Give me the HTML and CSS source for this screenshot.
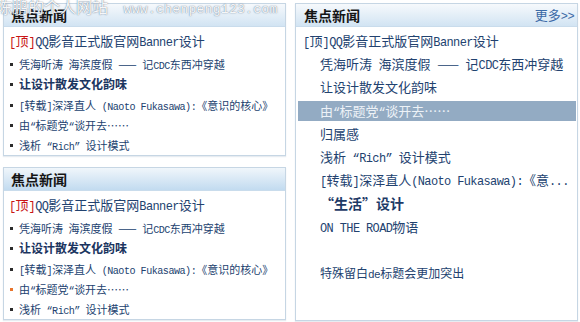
FILE: index.html
```html
<html>
<head>
	<meta charset="utf-8">
	<title>焦点新闻</title>
	<link rel="stylesheet" href="styles.css">
</head>
<body>
<div class="page">
	<div class="mark">陈鹏的个人网站 <span class="mark-url">www.chenpeng123.com</span></div>

	<div class="col">
		<!-- box 1 -->
		<div class="box box-small">
			<div class="box-hd"><h2>焦点新闻</h2></div>
			<ul class="news">
				<li class="first"><em><span class="en">[</span>顶<span class="en">]</span></em><span class="en">QQ</span>影音正式版官网<span class="en">Banner</span>设计</li>
				<li>凭海听涛<span class="en"> </span>海滨度假<span class="en"> </span>——<span class="en"> </span>记<span class="en">CDC</span>东西冲穿越</li>
				<li class="bold">让设计散发文化韵味</li>
				<li><span class="en">[</span>转载<span class="en">]</span>深泽直人<span class="en"> (Naoto Fukasawa):</span>《意识的核心》</li>
				<li>由<span class="en">“</span>标题党<span class="en">“</span>谈开去……</li>
				<li>浅析<span class="en"> “Rich” </span>设计模式</li>
			</ul>
		</div>

		<!-- box 2 -->
		<div class="box box-small box-blue">
			<div class="box-hd"><h2>焦点新闻</h2></div>
			<ul class="news">
				<li class="first"><em><span class="en">[</span>顶<span class="en">]</span></em><span class="en">QQ</span>影音正式版官网<span class="en">Banner</span>设计</li>
				<li>凭海听涛<span class="en"> </span>海滨度假<span class="en"> </span>——<span class="en"> </span>记<span class="en">CDC</span>东西冲穿越</li>
				<li class="bold">让设计散发文化韵味</li>
				<li><span class="en">[</span>转载<span class="en">]</span>深泽直人<span class="en"> (Naoto Fukasawa):</span>《意识的核心》</li>
				<li class="hover">由<span class="en">“</span>标题党<span class="en">“</span>谈开去……</li>
				<li>浅析<span class="en"> “Rich” </span>设计模式</li>
			</ul>
		</div>
	</div>

	<!-- box 3 -->
	<div class="box box-big">
		<div class="box-hd">
			<h2>焦点新闻</h2>
			<a class="more">更多<span class="en">&gt;&gt;</span></a>
		</div>
		<ul class="list">
			<li class="first"><span class="en">[</span>顶<span class="en">]QQ</span>影音正式版官网<span class="en">Banner</span>设计</li>
			<li>凭海听涛<span class="en"> </span>海滨度假<span class="en"> </span>——<span class="en"> </span>记<span class="en">CDC</span>东西冲穿越</li>
			<li>让设计散发文化韵味</li>
			<li class="on">由<span class="en">“</span>标题党<span class="en">“</span>谈开去……</li>
			<li>归属感</li>
			<li>浅析<span class="en"> “Rich” </span>设计模式</li>
			<li><span class="en">[</span>转载<span class="en">]</span>深泽直人<span class="en">(Naoto Fukasawa):</span>《意<span class="en">...</span></li>
			<li class="bold">“生活”设计</li>
			<li><span class="en">ON THE ROAD</span>物语</li>
			<li>&nbsp;</li>
			<li class="small">特殊留白<span class="en">de</span>标题会更加突出</li>
		</ul>
	</div>
</div>
</body>
</html>
```

FILE: styles.css
```css
body {
	margin: 0;
	background: #fff;
	font-family: "Noto Sans CJK SC", sans-serif;
	color: #22426f;
}
ul {
	margin: 0;
	padding: 0;
	list-style: none;
}
.en {
	font-family: "Liberation Mono", monospace;
	font-size: 0.92em;
	letter-spacing: -0.05em;
	line-height: 1;
}

.page {
	position: relative;
	display: grid;
	grid-template-columns: 283px 283px;
	column-gap: 9px;
	padding: 3px;
}
.col {
	display: flex;
	flex-direction: column;
	gap: 11px;
}

/* watermark over the top left */
.mark {
	position: absolute;
	top: -5px;
	left: -4px;
	font-size: 16px;
	line-height: 22px;
	color: rgba(255, 255, 255, 0.96);
	text-shadow: 0 0 1px rgba(80, 100, 125, 0.9), 0 0 2px rgba(140, 160, 185, 0.5);
	white-space: nowrap;
	z-index: 2;
}
.mark-url {
	margin-left: 12px;
	font-family: "Liberation Mono", monospace;
	font-size: 13px;
	letter-spacing: 0.3px;
}

.box {
	border: 1px solid #c6d6e4;
	background: #fff;
	box-shadow: 0 1px 1px rgba(160, 180, 200, 0.25);
	overflow: hidden;
}
.box-small {
	height: 151px;
}
.box-big {
	height: 316px;
}
.box-hd {
	display: flex;
	justify-content: space-between;
	align-items: center;
	height: 22px;
	border-bottom: 1px solid #c9dcec;
	background: linear-gradient(#f6f9fc, #d2e4f3);
}
.box-blue .box-hd {
	background: linear-gradient(#f0f6fb, #c2dbf0);
}
.box-hd h2 {
	margin: 0;
	padding-left: 7px;
	font-size: 14px;
	line-height: 22px;
	font-weight: bold;
	color: #151515;
}
.box-big .box-hd h2 {
	padding-left: 8px;
}
.more {
	padding-right: 3px;
	font-size: 13px;
	line-height: 22px;
	color: #3b6aa6;
}

/* left lists */
.news {
	padding: 4px 0 0 5px;
}
.news li {
	position: relative;
	height: 20.25px;
	padding-left: 10px;
	font-size: 11px;
	line-height: 20px;
	white-space: nowrap;
}
.news li::before {
	content: "";
	position: absolute;
	left: 1px;
	top: 9px;
	width: 3px;
	height: 3px;
	background: #2c2c2c;
}
.news li.first {
	height: 20px;
	padding: 0 0 3px 0;
	font-size: 13px;
}
.news li.first::before {
	display: none;
}
.news em {
	font-style: normal;
	color: #c81414;
}
.news li.bold {
	font-size: 12px;
	font-weight: bold;
	color: #1b355f;
}
.news li.hover::before {
	background: #e8742c;
}

/* right list */
.list {
	padding-top: 4px;
}
.list li {
	height: 20px;
	margin: 0 1px 3.2px 2px;
	padding-left: 22px;
	font-size: 13px;
	line-height: 20px;
	white-space: nowrap;
}
.list li.first {
	padding-left: 5px;
}
.list li.on {
	background: #93abc3;
	color: #edf2f7;
}
.list li.bold {
	font-size: 14px;
	font-weight: bold;
	color: #1d3a66;
}
.list li.small {
	font-size: 12px;
}
```
